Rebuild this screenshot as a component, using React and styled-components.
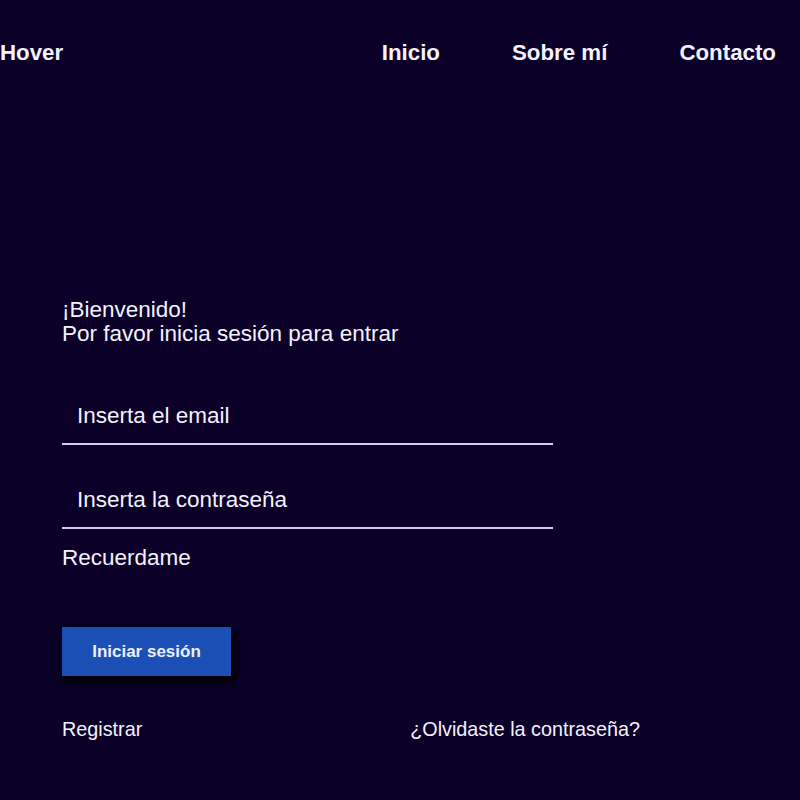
import React from "react";
import styled, { createGlobalStyle } from "styled-components";

const GlobalStyle = createGlobalStyle`
  html, body {
    margin: 0;
    padding: 0;
    background: #0a0028;
  }
  body {
    font-family: "Liberation Sans", Arial, sans-serif;
    color: #f4f2ff;
  }
`;

const Page = styled.div`
  width: 800px;
  height: 800px;
  overflow: hidden;
  background: #0a0028;
`;

const NavBar = styled.nav`
  display: flex;
  align-items: center;
  justify-content: space-between;
  height: 40px;
  padding: 33px 24px 0 0;
`;

const Logo = styled.div`
  font-size: 22.3px;
  font-weight: 700;
`;

const NavLinks = styled.div`
  display: flex;
  gap: 72px;
`;

const NavLink = styled.a`
  font-size: 22.3px;
  font-weight: 700;
  color: #f4f2ff;
  text-decoration: none;
`;

const Form = styled.form`
  display: flex;
  flex-direction: column;
  align-items: flex-start;
  padding: 225px 0 0 62px;
`;

const Greeting = styled.p`
  margin: 0 0 43px;
  font-size: 22.5px;
  line-height: 24px;
`;

const Field = styled.input`
  box-sizing: border-box;
  width: 491px;
  height: 56px;
  margin-bottom: ${(p) => p.$gap}px;
  padding: 0 15px;
  border: none;
  border-bottom: 2px solid #d3cbee;
  background: transparent;
  color: #f4f2ff;
  caret-color: #f4f2ff;
  font-family: "Liberation Sans", Arial, sans-serif;
  font-size: 22.5px;
  outline: none;
  &::placeholder {
    color: #f4f2ff;
    opacity: 1;
  }
`;

const Remember = styled.label`
  font-size: 22.5px;
  line-height: 25px;
  margin-bottom: 57px;
`;

const SubmitButton = styled.button`
  width: 169px;
  height: 49px;
  border: none;
  background: #1b4fb6;
  color: #eef0ff;
  font-family: "Liberation Sans", Arial, sans-serif;
  font-size: 17px;
  font-weight: 700;
  box-shadow: 3px 4px 7px 2px rgba(0, 0, 0, 0.95);
  margin-bottom: 42px;
`;

const Footer = styled.div`
  display: flex;
  justify-content: space-between;
  width: 578px;
`;

const FooterLink = styled.a`
  font-size: 19.8px;
  color: #f4f2ff;
  text-decoration: none;
`;

export default function App() {
  return (
    <Page>
      <GlobalStyle />
      <NavBar>
        <Logo>Hover</Logo>
        <NavLinks>
          <NavLink href="#">Inicio</NavLink>
          <NavLink href="#">Sobre mí</NavLink>
          <NavLink href="#">Contacto</NavLink>
        </NavLinks>
      </NavBar>
      <Form onSubmit={(e) => e.preventDefault()}>
        <Greeting>
          ¡Bienvenido!
          <br />
          Por favor inicia sesión para entrar
        </Greeting>
        <Field type="email" placeholder="Inserta el email" $gap={28} />
        <Field type="password" placeholder="Inserta la contraseña" $gap={16} autoFocus />
        <Remember>Recuerdame</Remember>
        <SubmitButton type="submit">Iniciar sesión</SubmitButton>
        <Footer>
          <FooterLink href="#">Registrar</FooterLink>
          <FooterLink href="#">¿Olvidaste la contraseña?</FooterLink>
        </Footer>
      </Form>
    </Page>
  );
}
